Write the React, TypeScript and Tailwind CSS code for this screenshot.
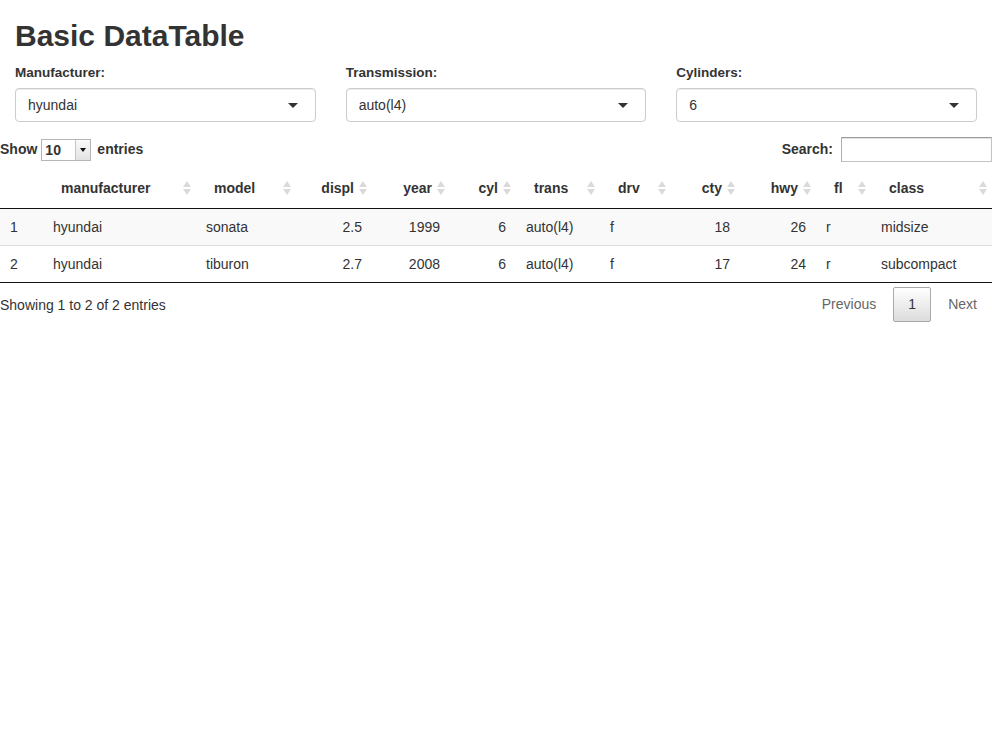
import React from 'react';

type Col = { name: string; width: number; right?: boolean };

const columns: Col[] = [
  { name: '', width: 43 },
  { name: 'manufacturer', width: 153 },
  { name: 'model', width: 100 },
  { name: 'displ', width: 76, right: true },
  { name: 'year', width: 78, right: true },
  { name: 'cyl', width: 66, right: true },
  { name: 'trans', width: 84 },
  { name: 'drv', width: 71 },
  { name: 'cty', width: 69, right: true },
  { name: 'hwy', width: 76, right: true },
  { name: 'fl', width: 55 },
  { name: 'class', width: 121 },
];

const rows = [
  ['1', 'hyundai', 'sonata', '2.5', '1999', '6', 'auto(l4)', 'f', '18', '26', 'r', 'midsize'],
  ['2', 'hyundai', 'tiburon', '2.7', '2008', '6', 'auto(l4)', 'f', '17', '24', 'r', 'subcompact'],
];

const filters = [
  { label: 'Manufacturer:', value: 'hyundai' },
  { label: 'Transmission:', value: 'auto(l4)' },
  { label: 'Cylinders:', value: '6' },
];

function SortIcon() {
  return (
    <svg width="8" height="14" viewBox="0 0 8 14">
      <path d="M4 0L8 6H0z" fill="#dadada" />
      <path d="M4 14L0 8h8z" fill="#dadada" />
    </svg>
  );
}

export default function App() {
  return (
    <div className="min-h-screen bg-white font-['Liberation_Sans',Arial,sans-serif] text-[14px] text-[#333]">
      <div className="px-[15px]">
        <h1 className="pt-5 text-[30px] font-bold leading-8">Basic DataTable</h1>

        {/* Filter inputs */}
        <div className="mt-[11px] grid grid-cols-3 gap-[30px]">
          {filters.map(f => (
            <div key={f.label}>
              <label className="block text-[13.5px] font-bold leading-5">{f.label}</label>
              <div className="mt-[5px] flex h-[34px] items-center justify-between rounded border border-[#ccc] bg-white pl-3 pr-[17px] shadow-[inset_0_1px_1px_rgba(0,0,0,0.075)]">
                <span>{f.value}</span>
                <span className="border-x-[5px] border-t-[5px] border-x-transparent border-t-[#333]" />
              </div>
            </div>
          ))}
        </div>
      </div>

      {/* Length + search controls */}
      <div className="mt-[15px] flex h-[25px] items-center justify-between">
        <div className="flex items-center font-bold">
          <span>Show</span>
          <div className="ml-[4px] mr-[6px] flex h-[22px] w-[50px] items-stretch border border-[#b5b5b5] bg-white">
            <span className="flex-1 pl-[3px] leading-5">10</span>
            <span className="flex w-[15px] items-center justify-center border-l border-[#c5c5c5] bg-gradient-to-b from-[#fafafa] to-[#e2e2e2]">
              <span className="border-x-[3.5px] border-t-[4px] border-x-transparent border-t-[#111]" />
            </span>
          </div>
          <span>entries</span>
        </div>
        <div className="flex items-center font-bold">
          <span>Search:</span>
          <div className="ml-2 h-[25px] w-[151px] border border-[#c3c3c3] border-t-[#9a9a9a] border-l-[#b0b0b0] bg-white shadow-[inset_0_1px_1px_rgba(0,0,0,0.12)]" />
        </div>
      </div>

      {/* Table */}
      <table className="mt-[6px] w-full table-fixed border-collapse border-b border-[#111]">
        <colgroup>
          {columns.map((c, i) => (
            <col key={i} style={{ width: c.width }} />
          ))}
        </colgroup>
        <thead>
          <tr>
            {columns.map((c, i) => (
              <th
                key={i}
                className={`relative border-b border-[#111] px-[18px] py-[10px] font-bold leading-5 ${c.right ? 'text-right' : 'text-left'}`}
              >
                {c.name}
                {c.name && (
                  <span className="absolute right-[5px] top-1/2 flex -translate-y-1/2">
                    <SortIcon />
                  </span>
                )}
              </th>
            ))}
          </tr>
        </thead>
        <tbody>
          {rows.map((r, ri) => (
            <tr key={ri} className={ri % 2 === 0 ? 'bg-[#f9f9f9]' : 'bg-white'}>
              {r.map((v, ci) => (
                <td
                  key={ci}
                  className={`px-[10px] py-2 leading-5 ${ri > 0 ? 'border-t border-[#ddd]' : ''} ${columns[ci].right ? 'text-right' : 'text-left'}`}
                >
                  {v}
                </td>
              ))}
            </tr>
          ))}
        </tbody>
      </table>

      {/* Info + pagination */}
      <div className="flex items-center justify-between pt-[4px]">
        <div className="pt-px">Showing 1 to 2 of 2 entries</div>
        <div className="flex items-center">
          <span className="flex h-[35px] items-center border border-transparent px-[14px] text-[#666]">Previous</span>
          <span className="ml-[2px] flex h-[35px] w-[38px] items-center justify-center rounded-[2px] border border-[#a9a9a9] bg-gradient-to-b from-white to-[#dcdcdc] text-[#333]">
            1
          </span>
          <span className="ml-[2px] flex h-[35px] items-center border border-transparent px-[14px] text-[#666]">Next</span>
        </div>
      </div>
    </div>
  );
}
